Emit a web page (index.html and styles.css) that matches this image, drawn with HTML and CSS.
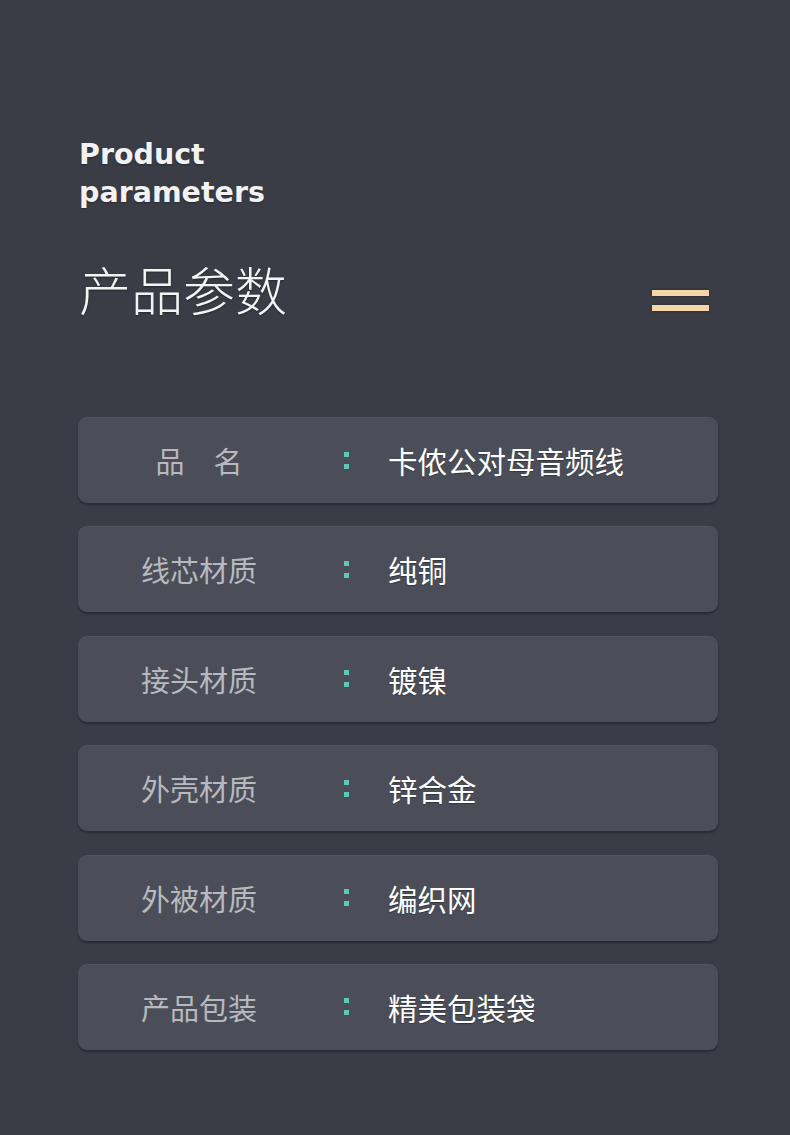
FILE: index.html
```html
<!DOCTYPE html>
<html lang="zh">
<head>
<meta charset="utf-8">
<title>产品参数</title>
<link rel="stylesheet" href="styles.css">
</head>
<body>
<main class="page">
  <header class="head">
    <div class="titles">
      <h2 class="en">Product<br>parameters</h2>
      <h1 class="zh">产品参数</h1>
    </div>
    <div class="menu" aria-hidden="true"><span></span><span></span></div>
  </header>
  <section class="list">
    <div class="row"><span class="label">品　名</span><span class="colon"></span><span class="value">卡侬公对母音频线</span></div>
    <div class="row"><span class="label">线芯材质</span><span class="colon"></span><span class="value">纯铜</span></div>
    <div class="row"><span class="label">接头材质</span><span class="colon"></span><span class="value">镀镍</span></div>
    <div class="row"><span class="label">外壳材质</span><span class="colon"></span><span class="value">锌合金</span></div>
    <div class="row"><span class="label">外被材质</span><span class="colon"></span><span class="value">编织网</span></div>
    <div class="row"><span class="label">产品包装</span><span class="colon"></span><span class="value">精美包装袋</span></div>
  </section>
</main>
</body>
</html>
```

FILE: styles.css
```css
html, body {
  margin: 0;
  padding: 0;
  background: #3a3d46;
}
body {
  width: 790px;
  height: 1135px;
  overflow: hidden;
  font-family: "Noto Sans CJK SC", "Noto Sans", sans-serif;
}
.page {
  padding: 136px 81px 0 78px;
}
.head {
  display: flex;
  justify-content: space-between;
  align-items: flex-start;
  padding-left: 1px;
}
.en {
  margin: 0;
  font-family: "DejaVu Sans", "Noto Sans", sans-serif;
  font-weight: 700;
  font-size: 28.5px;
  line-height: 38px;
  color: #f2f2f2;
  text-shadow: 0 1px 2px rgba(0,0,0,0.35);
}
.zh {
  margin: 45px 0 0;
  font-family: "Noto Sans CJK SC", sans-serif;
  font-weight: 300;
  font-size: 52px;
  line-height: 64px;
  color: #f4f4f4;
  text-shadow: 0 1px 2px rgba(0,0,0,0.35);
}
.menu {
  margin-top: 154px;
  display: flex;
  flex-direction: column;
  gap: 9px;
}
.menu span {
  display: block;
  width: 57px;
  height: 6px;
  background: #f6d5a6;
  box-shadow: 0 0 3px rgba(0,0,0,0.4);
}
.list {
  margin-top: 96px;
  display: flex;
  flex-direction: column;
  gap: 23.4px;
  width: 640px;
}
.row {
  display: grid;
  grid-template-columns: 242px 24px 5px 39px 1fr;
  align-items: center;
  height: 86px;
  background: #4b4e58;
  border-radius: 9px;
  box-shadow: 0 2px 2px rgba(20,22,28,0.45), inset 0 1px 0 rgba(255,255,255,0.04);
}
.label {
  grid-column: 1;
  text-align: center;
  font-size: 29px;
  color: #b8b9be;
  line-height: 40px;
}
.colon {
  grid-column: 3;
  height: 17px;
  width: 5px;
  background:
    linear-gradient(#5cc8b9, #5cc8b9) 0 0 / 5px 5px no-repeat,
    linear-gradient(#5cc8b9, #5cc8b9) 0 12px / 5px 5px no-repeat;
}
.value {
  grid-column: 5;
  font-size: 29.5px;
  color: #ffffff;
  line-height: 40px;
  text-shadow: 0 1px 1px rgba(0,0,0,0.3);
}
```
